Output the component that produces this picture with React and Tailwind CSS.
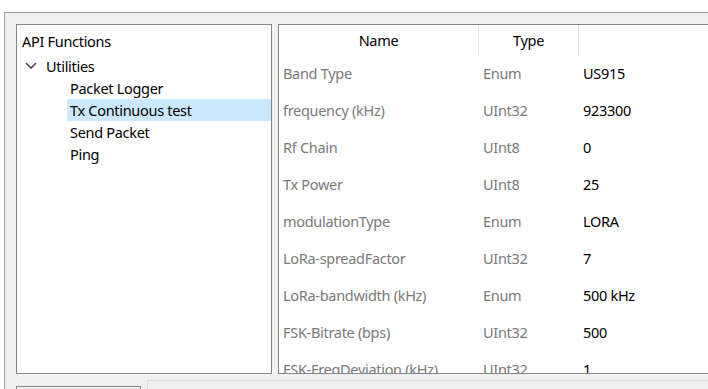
import React from "react";

const rows = [
  ["Band Type", "Enum", "US915"],
  ["frequency (kHz)", "UInt32", "923300"],
  ["Rf Chain", "UInt8", "0"],
  ["Tx Power", "UInt8", "25"],
  ["modulationType", "Enum", "LORA"],
  ["LoRa-spreadFactor", "UInt32", "7"],
  ["LoRa-bandwidth (kHz)", "Enum", "500 kHz"],
  ["FSK-Bitrate (bps)", "UInt32", "500"],
  ["FSK-FreqDeviation (kHz)", "UInt32", "1"],
];

export default function App() {
  return (
    <div
      className="w-[708px] h-[389px] overflow-hidden bg-white text-[14.5px] tracking-[-0.3px] text-black"
      style={{ fontFamily: '"Noto Sans", "Open Sans", sans-serif' }}
    >
      <div className="h-[12px] bg-white" />
      <div className="ml-[4px] h-[377px] border-t border-l border-[#a0a0a0] bg-[#f0f0f0] pl-[11px] pt-[11px]">
        <div className="flex gap-[6px] h-[350px]">
          {/* Tree panel */}
          <div className="w-[256px] shrink-0 border border-[#828790] bg-white leading-[22px]">
            <div className="pl-[5px] mt-[5px] h-[22px] flex items-center">API Functions</div>
            <div className="h-[22px] mt-[3px] flex items-center">
              <svg width="12" height="8" viewBox="0 0 12 8" className="ml-[8px] mr-[9px]">
                <polyline points="1,1 6,6 11,1" fill="none" stroke="#4a4a4a" strokeWidth="1.6" />
              </svg>
              <span>Utilities</span>
            </div>
            <div className="h-[22px] pl-[53px]">Packet Logger</div>
            <div className="h-[22px] ml-[50px] pl-[3px] bg-[#cce8ff]">Tx Continuous test</div>
            <div className="h-[22px] pl-[53px]">Send Packet</div>
            <div className="h-[22px] pl-[53px]">Ping</div>
          </div>
          {/* Property grid */}
          <div className="w-[500px] shrink-0 border border-[#828790] bg-white overflow-hidden">
            <div className="flex h-[31px]">
              <div className="w-[200px] border-r border-[#e5e5e5] flex items-center justify-center">Name</div>
              <div className="w-[100px] border-r border-[#e5e5e5] flex items-center justify-center">Type</div>
              <div className="flex-1" />
            </div>
            {rows.map(([n, t, v]) => (
              <div key={n} className="flex h-[37px] items-center pb-[2px]">
                <div className="w-[200px] pl-[4px] text-[#7a7a7a] whitespace-nowrap">{n}</div>
                <div className="w-[100px] pl-[4px] text-[#7a7a7a]">{t}</div>
                <div className="pl-[4px]">{v}</div>
              </div>
            ))}
          </div>
        </div>
        <div className="flex mt-[6px] items-start">
          <div className="w-[125px] h-[20px] mt-[6px] border border-[#828790] bg-[#f0f0f0]" />
          <div className="ml-[6px] flex-1 h-[20px] border-t border-l border-[#dcdcdc]" />
        </div>
      </div>
    </div>
  );
}
